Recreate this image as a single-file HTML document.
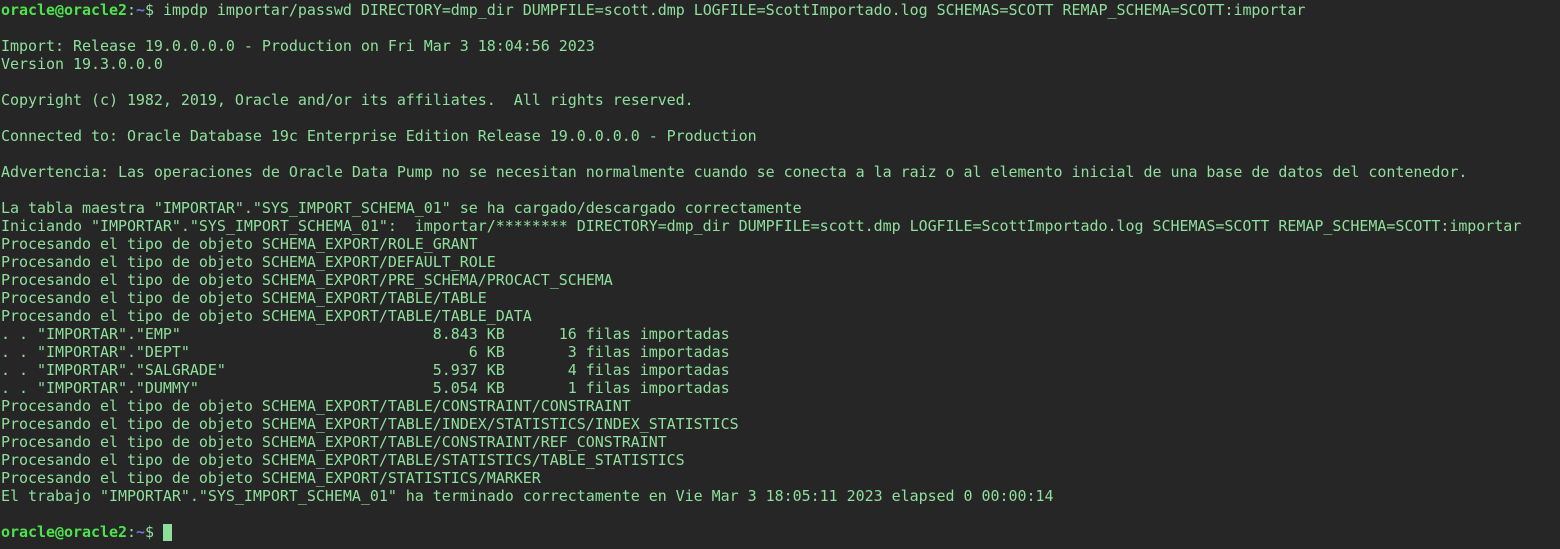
<!DOCTYPE html><html><head><style>
html,body{margin:0;background:#262626;width:1560px;height:549px;overflow:hidden}
pre{margin:0;padding:1px 0 0 1px;font-family:"DejaVu Sans Mono","Liberation Mono",monospace;font-size:15px;letter-spacing:-0.035px;line-height:18px;color:#8fdf9c;white-space:pre}
.p{color:#4ee34e;font-weight:bold}.t{color:#6b78e0;font-weight:bold}
.c{display:inline-block;width:9px;height:17px;background:#8fdf9c;vertical-align:-4px}
</style></head><body><pre><span class="p">oracle@oracle2</span>:<span class="t">~</span>$ impdp importar/passwd DIRECTORY=dmp_dir DUMPFILE=scott.dmp LOGFILE=ScottImportado.log SCHEMAS=SCOTT REMAP_SCHEMA=SCOTT:importar

Import: Release 19.0.0.0.0 - Production on Fri Mar 3 18:04:56 2023
Version 19.3.0.0.0

Copyright (c) 1982, 2019, Oracle and/or its affiliates.  All rights reserved.

Connected to: Oracle Database 19c Enterprise Edition Release 19.0.0.0.0 - Production

Advertencia: Las operaciones de Oracle Data Pump no se necesitan normalmente cuando se conecta a la raiz o al elemento inicial de una base de datos del contenedor.

La tabla maestra "IMPORTAR"."SYS_IMPORT_SCHEMA_01" se ha cargado/descargado correctamente
Iniciando "IMPORTAR"."SYS_IMPORT_SCHEMA_01":  importar/******** DIRECTORY=dmp_dir DUMPFILE=scott.dmp LOGFILE=ScottImportado.log SCHEMAS=SCOTT REMAP_SCHEMA=SCOTT:importar
Procesando el tipo de objeto SCHEMA_EXPORT/ROLE_GRANT
Procesando el tipo de objeto SCHEMA_EXPORT/DEFAULT_ROLE
Procesando el tipo de objeto SCHEMA_EXPORT/PRE_SCHEMA/PROCACT_SCHEMA
Procesando el tipo de objeto SCHEMA_EXPORT/TABLE/TABLE
Procesando el tipo de objeto SCHEMA_EXPORT/TABLE/TABLE_DATA
. . "IMPORTAR"."EMP"                            8.843 KB      16 filas importadas
. . "IMPORTAR"."DEPT"                               6 KB       3 filas importadas
. . "IMPORTAR"."SALGRADE"                       5.937 KB       4 filas importadas
. . "IMPORTAR"."DUMMY"                          5.054 KB       1 filas importadas
Procesando el tipo de objeto SCHEMA_EXPORT/TABLE/CONSTRAINT/CONSTRAINT
Procesando el tipo de objeto SCHEMA_EXPORT/TABLE/INDEX/STATISTICS/INDEX_STATISTICS
Procesando el tipo de objeto SCHEMA_EXPORT/TABLE/CONSTRAINT/REF_CONSTRAINT
Procesando el tipo de objeto SCHEMA_EXPORT/TABLE/STATISTICS/TABLE_STATISTICS
Procesando el tipo de objeto SCHEMA_EXPORT/STATISTICS/MARKER
El trabajo "IMPORTAR"."SYS_IMPORT_SCHEMA_01" ha terminado correctamente en Vie Mar 3 18:05:11 2023 elapsed 0 00:00:14

<span class="p">oracle@oracle2</span>:<span class="t">~</span>$ <span class="c"></span></pre></body></html>
